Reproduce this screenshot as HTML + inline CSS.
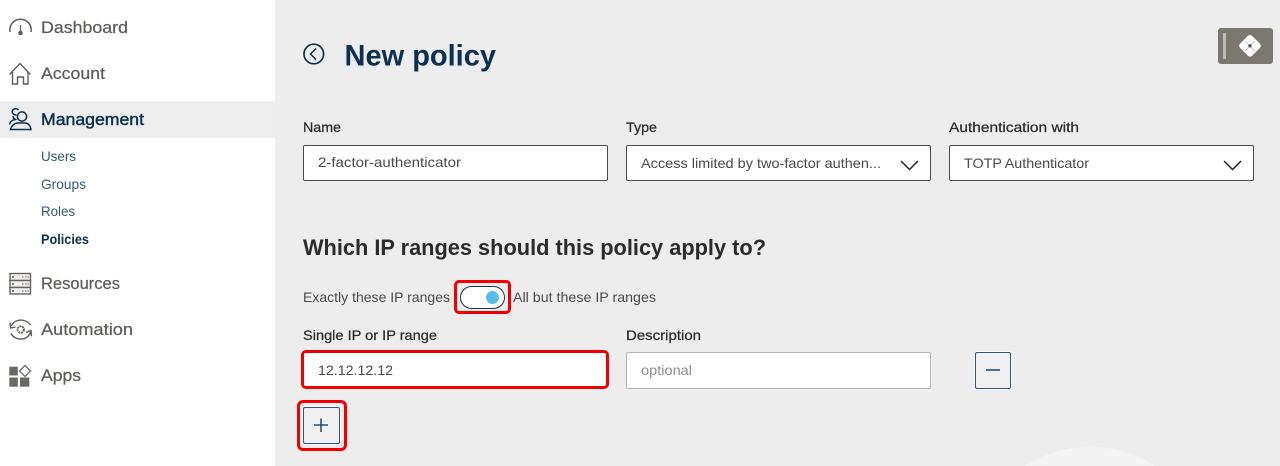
<!DOCTYPE html>
<html lang="en">
<head>
<meta charset="utf-8">
<title>New policy</title>
<style>
html,body{margin:0;padding:0;width:1280px;height:466px;overflow:hidden;background:#ededed;font-family:"Liberation Sans",sans-serif}
#page{position:relative;width:1280px;height:466px;overflow:hidden;background:#ededed}
.a{position:absolute;box-sizing:border-box}
.f{background:#fff;border:1px solid #4a4a48;border-radius:2px}
svg{display:block}
svg text{font-family:"Liberation Sans",sans-serif}
</style>
</head>
<body>
<div id="page">
<div class="a" style="left:0;top:0;width:275px;height:466px;background:#fff"></div>
<div class="a" style="left:0;top:101px;width:275px;height:37px;background:#eeeeee"></div>
<svg class="a" style="left:1020px;top:445px" width="140" height="21" viewBox="1020 445 140 21"><path d="M1025 466A120 120 0 0 1 1155 466Z" fill="#f4f4f4"/></svg>

<div class="a f" style="left:303px;top:144.500px;width:305px;height:36.500px"></div>
<div class="a f" style="left:626px;top:144.500px;width:305px;height:36.500px"></div>
<div class="a f" style="left:949px;top:144.500px;width:305px;height:36.500px"></div>
<div class="a" style="left:301px;top:350px;width:308px;height:39px;background:#fff;border:3px solid #f00000;border-radius:5px"></div>
<div class="a" style="left:626px;top:351.500px;width:305px;height:37px;background:#fff;border:1px solid #b5b5b5;border-radius:2px"></div>
<div class="a" style="left:975px;top:352px;width:36px;height:36.500px;background:#f0f0f0;border:1px solid #2f5578;border-radius:2px;box-shadow:0 0 0 1px #fafafa"></div>
<div class="a" style="left:297px;top:400px;width:50px;height:51px;border:3px solid #f00000;border-radius:6px"></div>
<div class="a" style="left:303px;top:407px;width:37px;height:37px;background:#f0f0f0;border:1px solid #2f5578;border-radius:2px;box-shadow:0 0 0 1px #fafafa"></div>
<div class="a" style="left:454px;top:280px;width:57px;height:34px;border:3px solid #f00000;border-radius:5px"></div>
<div class="a" style="left:459.500px;top:285.500px;width:45px;height:23px;background:#fff;border:1px solid #0f3557;border-radius:12px"></div>
<div class="a" style="left:486px;top:290.500px;width:13px;height:13px;background:#58bde8;border-radius:50%"></div>
<div class="a" style="left:1217px;top:27px;width:57px;height:38px;background:#7b7872;border:1px solid #efefef;border-radius:4px"></div>
<div class="a" style="left:1223px;top:33px;width:3px;height:26px;background:#bdbbb7"></div>

<svg class="a" style="left:0;top:0" width="1280" height="466" viewBox="0 0 1280 466">
  <!-- sidebar text -->
  <g font-size="17" fill="#5f5d5a" stroke="#5f5d5a" stroke-width=".25">
    <text x="41" y="33" textLength="87" lengthAdjust="spacingAndGlyphs">Dashboard</text>
    <text x="41" y="79" textLength="64" lengthAdjust="spacingAndGlyphs">Account</text>
    <text x="41" y="289" textLength="79" lengthAdjust="spacingAndGlyphs">Resources</text>
    <text x="41" y="335" textLength="92" lengthAdjust="spacingAndGlyphs">Automation</text>
    <text x="41" y="381" textLength="40" lengthAdjust="spacingAndGlyphs">Apps</text>
  </g>
  <text x="41" y="125" font-size="17" fill="#0c2f52" stroke="#0c2f52" stroke-width=".45" textLength="103" lengthAdjust="spacingAndGlyphs">Management</text>
  <g font-size="14" fill="#36587a">
    <text x="41" y="161" textLength="35" lengthAdjust="spacingAndGlyphs">Users</text>
    <text x="41" y="189" textLength="45" lengthAdjust="spacingAndGlyphs">Groups</text>
    <text x="41" y="216" textLength="34" lengthAdjust="spacingAndGlyphs">Roles</text>
  </g>
  <text x="41" y="244" font-size="14" font-weight="700" fill="#0c2f52" textLength="48" lengthAdjust="spacingAndGlyphs">Policies</text>

  <!-- header -->
  <text x="344.500" y="65.500" font-size="30" font-weight="700" fill="#0c2f52" textLength="151.500" lengthAdjust="spacingAndGlyphs">New policy</text>
  <circle cx="313.800" cy="54" r="9.800" fill="none" stroke="#0c2f52" stroke-width="1.700"/>
  <path d="M316 48.500L310.500 54L316 59.500" fill="none" stroke="#0c2f52" stroke-width="1.500"/>

  <!-- labels -->
  <g font-size="14" fill="#2b2b2b" stroke="#2b2b2b" stroke-width=".25">
    <text x="303" y="132" textLength="38" lengthAdjust="spacingAndGlyphs">Name</text>
    <text x="626" y="132" textLength="31" lengthAdjust="spacingAndGlyphs">Type</text>
    <text x="949" y="132" textLength="130" lengthAdjust="spacingAndGlyphs">Authentication with</text>
    <text x="303" y="340" textLength="134" lengthAdjust="spacingAndGlyphs">Single IP or IP range</text>
    <text x="626" y="340" textLength="75" lengthAdjust="spacingAndGlyphs">Description</text>
  </g>
  <g font-size="14" fill="#4a4a48">
    <text x="318" y="167" textLength="143" lengthAdjust="spacingAndGlyphs">2-factor-authenticator</text>
    <text x="641" y="168" textLength="240" lengthAdjust="spacingAndGlyphs">Access limited by two-factor authen...</text>
    <text x="964" y="168" textLength="125" lengthAdjust="spacingAndGlyphs">TOTP Authenticator</text>
    <text x="303" y="302" textLength="147" lengthAdjust="spacingAndGlyphs">Exactly these IP ranges</text>
    <text x="513" y="302" textLength="143" lengthAdjust="spacingAndGlyphs">All but these IP ranges</text>
    <text x="318" y="375" textLength="75" lengthAdjust="spacingAndGlyphs">12.12.12.12</text>
  </g>
  <text x="641" y="375" font-size="14" fill="#8e8e8e" textLength="51" lengthAdjust="spacingAndGlyphs">optional</text>
  <text x="303" y="255" font-size="22" font-weight="700" fill="#2b2b2b" textLength="463" lengthAdjust="spacingAndGlyphs">Which IP ranges should this policy apply to?</text>

  <!-- chevrons, plus, minus -->
  <path d="M901 161L909.500 169.500L918 161" fill="none" stroke="#222" stroke-width="1.500"/>
  <path d="M1224 161L1232.500 169.500L1241 161" fill="none" stroke="#222" stroke-width="1.500"/>
  <path d="M321 418.500V432M314 425H328" stroke="#0c2f52" stroke-width="1.300"/>
  <path d="M986 370H1000" stroke="#0c3a62" stroke-width="1.400"/>

  <!-- dashboard icon -->
  <path d="M10 32A10.700 10.700 0 1 1 31 32" fill="none" stroke="#5f5d5a" stroke-width="1.500"/>
  <path d="M20.500 25V33" stroke="#5f5d5a" stroke-width="1.200"/>
  <circle cx="20.500" cy="33" r="2.300" fill="#5f5d5a"/>

  <!-- account icon -->
  <path d="M9.500 74.500L20 63.500L30.500 74.500M12.500 72V84H17.500V77H23.500V84H28V72" fill="none" stroke="#5f5d5a" stroke-width="1.400"/>

  <!-- management icon -->
  <g fill="none" stroke="#0c2f52" stroke-width="1.500">
    <circle cx="22" cy="116.500" r="4.600"/>
    <path d="M10.500 129.500H31C30.500 125.500 28 123 25 123H18.500C14.500 123 11.500 125.500 10.500 129.500Z"/>
    <path d="M16.500 115C13 115 11.500 112.500 12.500 110.500C13.500 108.500 17 108 18.500 110M13 116C13 118 14 118.500 15.500 119.500C12 120 10 121.500 9.500 124.500"/>
  </g>

  <!-- resources icon -->
  <g fill="none" stroke="#66635f" stroke-width="1.400">
    <rect x="10" y="273.500" width="20.500" height="7" fill="#efefef"/>
    <rect x="10" y="280.500" width="20.500" height="7" fill="#efefef"/>
    <rect x="10" y="287.500" width="20.500" height="6.500" fill="#efefef"/>
  </g>
  <g fill="#66635f">
    <circle cx="13" cy="277" r="1"/><circle cx="13" cy="284" r="1"/><circle cx="13" cy="291" r="1"/>
    <path d="M22 276.500h1.500v1h-1.500zM25 276.500h1.500v1h-1.500zM27.500 276.500h1.500v1h-1.500zM22 283.500h1.500v1h-1.500zM25 283.500h1.500v1h-1.500zM27.500 283.500h1.500v1h-1.500zM22 290.500h1.500v1h-1.500zM25 290.500h1.500v1h-1.500zM27.500 290.500h1.500v1h-1.500z"/>
  </g>

  <!-- automation icon -->
  <g fill="none" stroke="#5f5d5a" stroke-width="1.400">
    <path d="M11.500 326C14.500 318.500 25.500 318 30.500 325"/>
    <path d="M30.500 332C27.500 341.500 15 341 11 333.500"/>
    <path d="M10 322.500L10.500 328L15.500 327M31.500 336L31 330.500L26 332.500"/>
    <circle cx="20.700" cy="329.500" r="3.300" stroke-width="1.800" stroke-dasharray="2 .8"/>
  </g>

  <!-- apps icon -->
  <g fill="#6b6864">
    <rect x="9.300" y="366.700" width="8.500" height="8.800"/>
    <rect x="9.300" y="377.500" width="8.500" height="9.200"/>
    <rect x="20" y="377.500" width="9.300" height="9.200"/>
  </g>
  <path d="M25 365.500L30.500 371L25 376.500L19.500 371Z" fill="#fff" stroke="#6b6864" stroke-width="1.300"/>

  <!-- top-right widget icon -->
  <rect x="1241.500" y="37.300" width="17" height="17" rx="3" transform="rotate(45 1250 45.800)" fill="#fff"/>
  <path d="M1245 41L1255 51M1255 41L1245 51" stroke="#b3b1ad" stroke-width=".8"/>
  <circle cx="1250" cy="45.800" r="1.700" fill="#55534f"/>
</svg>
</div>
</body>
</html>
